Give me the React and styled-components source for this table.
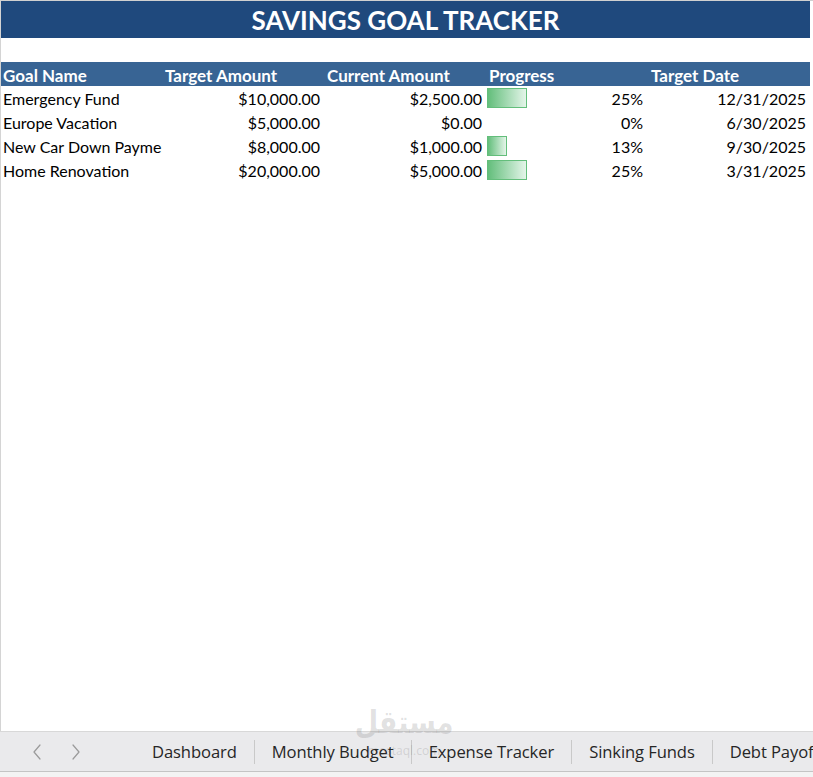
import React from "react";
import styled, { createGlobalStyle } from "styled-components";

const Global = createGlobalStyle`
  html, body { margin: 0; padding: 0; background: #ffffff; }
  body { width: 813px; height: 777px; overflow: hidden; }
  * { box-sizing: border-box; }
`;

const Page = styled.div`
  position: relative;
  width: 813px;
  height: 777px;
  display: flex;
  flex-direction: column;
  background: #ffffff;
  font-family: "Lato", "Liberation Sans", sans-serif;
`;

const Sheet = styled.div`
  flex: 1;
  border-top: 1px solid #d0d0d0;
  border-left: 1px solid #d4d4d4;
  display: flex;
  flex-direction: column;
`;

const TitleBar = styled.div`
  width: 809px;
  height: 37px;
  background: #1f497d;
  color: #ffffff;
  font-weight: 700;
  font-size: 26px;
  display: flex;
  align-items: center;
  justify-content: center;
`;

const Spacer = styled.div`
  height: 24px;
`;

const Grid = styled.div`
  display: grid;
  grid-template-columns: 161px 162px 162px 162px 162px;
  grid-auto-rows: 24px;
  width: 809px;
`;

const HeadCell = styled.div`
  background: #386494;
  color: #ffffff;
  font-weight: 700;
  font-size: 17px;
  padding-left: ${(p) => (p.$first ? "2px" : "3px")};
  padding-top: 2px;
  display: flex;
  align-items: center;
  white-space: nowrap;
  overflow: hidden;
`;

const Cell = styled.div`
  font-size: 16px;
  color: #000000;
  display: flex;
  align-items: center;
  justify-content: ${(p) => (p.$right ? "flex-end" : "flex-start")};
  padding: 0 ${(p) => (p.$right ? "4px" : "0")} 0 ${(p) => (p.$right ? "0" : "2px")};
  white-space: nowrap;
  overflow: hidden;
`;

const BarCell = styled.div`
  font-size: 16px;
  color: #000000;
  display: flex;
  align-items: center;
  padding: 0 5px 0 1px;
  white-space: nowrap;
`;

const Bar = styled.div`
  height: 20px;
  flex: none;
  border: 1px solid #63be7b;
  background: linear-gradient(to right, #63be7b 0%, #a9dcb7 55%, #e4f5e9 100%);
`;

const Pct = styled.span`
  margin-left: auto;
`;

const TabBar = styled.div`
  height: 41px;
  background: #eaeaec;
  border-top: 1px solid #d8d8d8;
  border-bottom: 1px solid #c4c4c4;
  display: flex;
  align-items: center;
  font-family: "Open Sans", "Noto Sans", sans-serif;
  font-size: 16.6px;
  color: #262626;
  white-space: nowrap;
  overflow: hidden;
`;

const Nav = styled.div`
  display: flex;
  align-items: center;
  gap: 29px;
  padding-left: 32px;
  width: 135px;
  flex: none;
`;

const Tab = styled.div`
  padding: 0 17px;
  flex: none;
  display: flex;
  align-items: center;
  height: 100%;
  letter-spacing: -0.1px;
`;

const Sep = styled.div`
  width: 1px;
  height: 24px;
  background: #c9c9c9;
  flex: none;
`;

const Footer = styled.div`
  height: 5px;
  background: #f3f3f3;
`;

const Watermark = styled.div`
  position: absolute;
  left: 356px;
  top: 703px;
  width: 96px;
  display: flex;
  flex-direction: column;
  align-items: center;
  pointer-events: none;
  color: rgba(105, 105, 105, 0.2);
`;

const WmArabic = styled.div`
  font-family: "DejaVu Sans", sans-serif;
  font-weight: 700;
  font-size: 27px;
  line-height: 40px;
  transform: scaleY(1.15);
`;

const WmLatin = styled.div`
  font-family: "Open Sans", sans-serif;
  font-size: 12px;
  line-height: 12px;
  margin-top: 2px;
`;

const Chevron = ({ dir }) => (
  <svg width="10" height="16" viewBox="0 0 10 16" fill="none">
    <path
      d={dir === "left" ? "M8 1 L2 8 L8 15" : "M2 1 L8 8 L2 15"}
      stroke="#9a9a9a"
      strokeWidth="1.2"
      strokeLinecap="round"
      strokeLinejoin="round"
    />
  </svg>
);

const rows = [
  { name: "Emergency Fund", target: "$10,000.00", current: "$2,500.00", p: 0.25, pct: "25%", date: "12/31/2025" },
  { name: "Europe Vacation", target: "$5,000.00", current: "$0.00", p: 0, pct: "0%", date: "6/30/2025" },
  { name: "New Car Down Payment", target: "$8,000.00", current: "$1,000.00", p: 0.125, pct: "13%", date: "9/30/2025" },
  { name: "Home Renovation", target: "$20,000.00", current: "$5,000.00", p: 0.25, pct: "25%", date: "3/31/2025" },
];

const tabs = ["Dashboard", "Monthly Budget", "Expense Tracker", "Sinking Funds", "Debt Payoff"];

export default function App() {
  return (
    <Page>
      <Global />
      <Sheet>
        <TitleBar>SAVINGS GOAL TRACKER</TitleBar>
        <Spacer />
        <Grid>
          <HeadCell $first>Goal Name</HeadCell>
          <HeadCell>Target Amount</HeadCell>
          <HeadCell>Current Amount</HeadCell>
          <HeadCell>Progress</HeadCell>
          <HeadCell>Target Date</HeadCell>
          {rows.map((r) => (
            <React.Fragment key={r.name}>
              <Cell>{r.name}</Cell>
              <Cell $right>{r.target}</Cell>
              <Cell $right>{r.current}</Cell>
              <BarCell>
                {r.p > 0 && <Bar style={{ width: `${Math.round(r.p * 160)}px` }} />}
                <Pct>{r.pct}</Pct>
              </BarCell>
              <Cell $right>{r.date}</Cell>
            </React.Fragment>
          ))}
        </Grid>
      </Sheet>
      <TabBar>
        <Nav>
          <Chevron dir="left" />
          <Chevron dir="right" />
        </Nav>
        {tabs.map((t, i) => (
          <React.Fragment key={t}>
            {i > 0 && <Sep />}
            <Tab>{t}</Tab>
          </React.Fragment>
        ))}
      </TabBar>
      <Footer />
      <Watermark>
        <WmArabic>مستقل</WmArabic>
        <WmLatin>mostaql.com</WmLatin>
      </Watermark>
    </Page>
  );
}
